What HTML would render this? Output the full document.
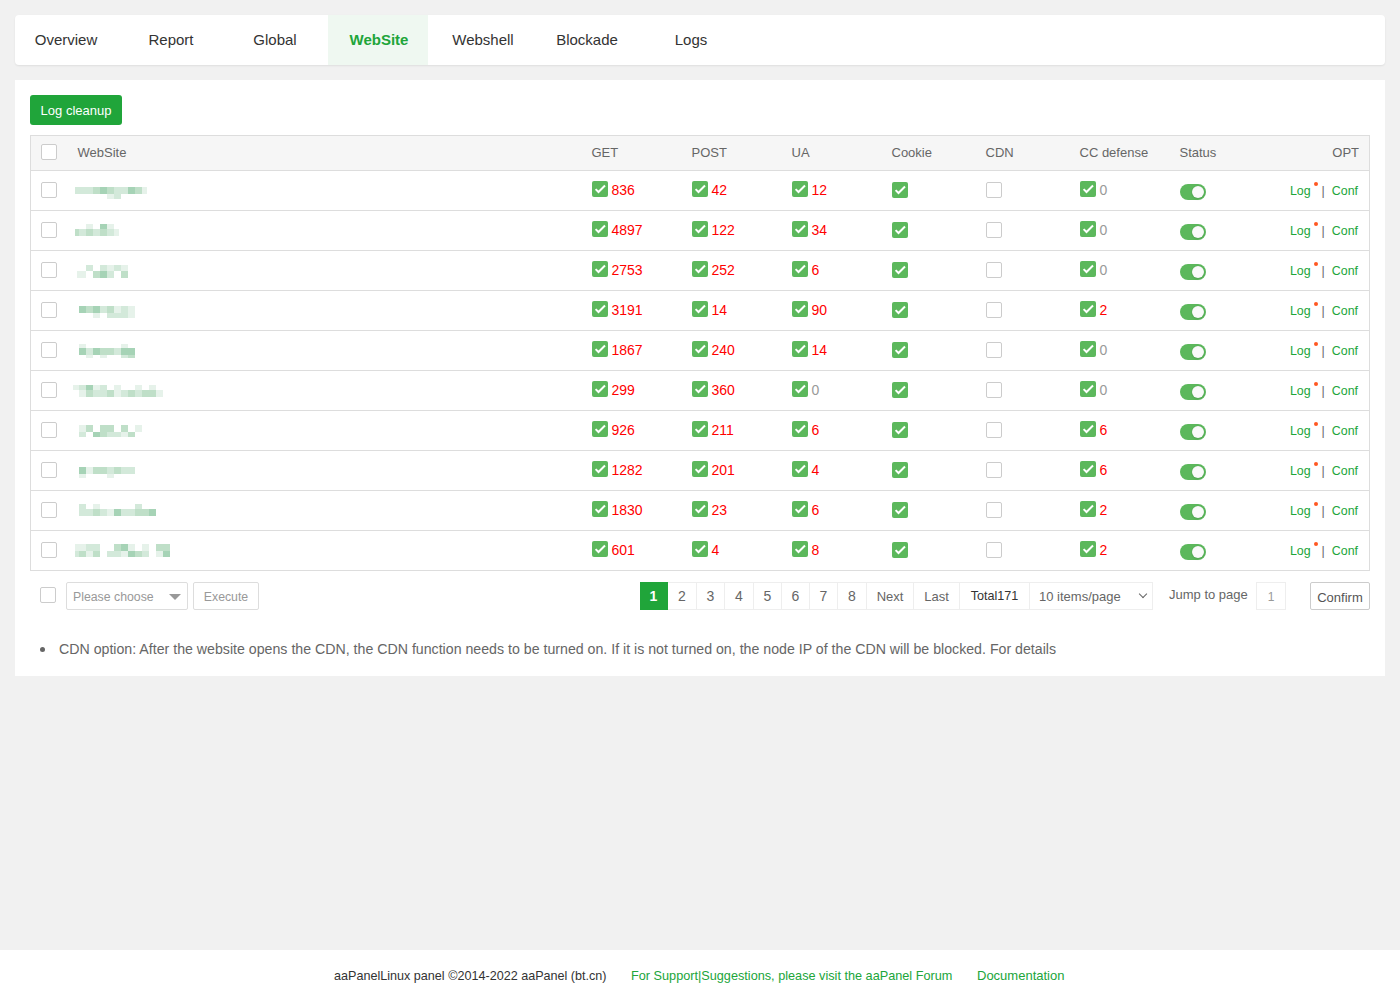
<!DOCTYPE html>
<html><head><meta charset="utf-8">
<style>
*{box-sizing:border-box;margin:0;padding:0}
html,body{width:1400px;height:1000px;overflow:hidden}
body{background:#f1f1f1;font-family:"Liberation Sans",sans-serif;color:#333;position:relative}
.nav{position:absolute;left:15px;top:15px;width:1370px;height:50px;background:#fff;border-radius:4px;box-shadow:0 1px 2px rgba(0,0,0,.08)}
.nav a{position:absolute;top:0;width:100px;height:50px;line-height:50px;text-align:center;font-size:15px;color:#333}
.nav a+a{padding-left:2px}
.nav a.on{background:#eff8f1;color:#20a53a;font-weight:bold}
.card{position:absolute;left:15px;top:80px;width:1370px;height:596px;background:#fff}
.btn{position:absolute;left:15px;top:15px;width:92px;height:30px;background:#20a53a;color:#fff;border-radius:3px;font-size:13px;line-height:32px;text-align:center}
table{position:absolute;left:15px;top:55px;width:1340px;border-collapse:collapse;table-layout:fixed;font-size:13px}
th,td{border-top:1px solid #ddd;padding:0 10px;text-align:left;white-space:nowrap}
table{border:1px solid #ddd}
th{padding-bottom:2px;height:35px;background:#f6f6f6;font-weight:normal;color:#666;font-size:13px}
td{height:40px;color:#666;padding-bottom:2px}
.bx{display:inline-block;width:16px;height:16px;border:1px solid #ccc;border-radius:2px;vertical-align:middle;background:#fff}
.ck{display:inline-block;width:16px;height:16px;background:#5cb85c;border-radius:2px;vertical-align:middle}
.ck svg{display:block}
.c2 .ck,.c3 .ck,.c4 .ck,.c7 .ck{position:relative;top:-1px}
.tg{position:relative;top:2px}
.n{display:inline-block;margin-left:4px;vertical-align:middle;font-size:14px}
.r{color:#f00}.z{color:#999}
.tg{display:inline-block;position:relative;width:26px;height:16px;border-radius:8px;background:#5cb85c;vertical-align:middle}
.tg i{position:absolute;right:1.5px;top:2px;width:12px;height:12px;border-radius:50%;background:#fafafa;box-shadow:0 0 1px rgba(0,80,0,.35),0 2px 2px rgba(0,0,0,.06)}
.c9{text-align:right;color:#20a53a;font-size:12.4px;padding-right:11px}
.c9 a,.c9 .sep{position:relative;top:1px}
.c9 a{color:#20a53a}
.dot{display:inline-block;width:4px;height:4px;border-radius:50%;background:#ff5722;vertical-align:baseline;margin:0 0 0 3px;position:relative;top:-8px}
.sep{margin:0 7px 0 4px;color:#666}
.blob{display:inline-block;height:12px;background:#d3eadb;vertical-align:middle;border-radius:3px}
.foot{position:absolute;left:0;top:950px;width:1400px;height:50px;background:#fff;font-size:13px;line-height:50px;text-align:center}
.foot span{position:absolute;top:1px;white-space:nowrap}
.foot .g{color:#20a53a}
.pg{position:absolute;top:502px;height:28px;font-size:14px}

.sel{position:absolute;top:582px;height:28px;border:1px solid #ddd;border-radius:2px;font-size:12.3px;color:#999;line-height:28px;padding-left:6px}
.exe{padding-left:0;text-align:center}
.tri{position:absolute;right:6px;top:11px;width:0;height:0;border-left:6px solid transparent;border-right:6px solid transparent;border-top:6px solid #999}
.pgs span{position:absolute;top:582px;height:28px;border-top:1px solid #eee;border-bottom:1px solid #eee;border-right:1px solid #eee;text-align:center;line-height:27px;font-size:14px;color:#666}
.pgs span.on{background:#20a53a;color:#fff;border-color:#20a53a;font-weight:bold}
.pgs span.wd{font-size:13px}
.pgs .tot{color:#333;font-size:12.6px}
.pgs .ipp{font-size:13px;color:#666;text-align:left;padding-left:9px}
.chev{position:absolute;right:6px;top:8px;width:6px;height:6px;border-right:1.5px solid #666;border-bottom:1.5px solid #666;transform:rotate(45deg)}
.jump{position:absolute;top:582px;height:28px;line-height:26px;font-size:13px;color:#666}
.inp{position:absolute;top:582px;width:30px;height:28px;border:1px solid #eee;text-align:center;line-height:28px;font-size:12px;color:#999}
.conf{position:absolute;top:582px;width:60px;height:28px;border:1px solid #ccc;border-radius:2px;text-align:center;line-height:29px;font-size:13px;color:#555}
.note{position:absolute;left:59px;top:641px;font-size:14.18px;color:#666;white-space:nowrap}
.bul{position:absolute;left:-19.5px;top:6px;width:5px;height:5px;border-radius:50%;background:#666}
.blobs{position:absolute;left:0;top:0;pointer-events:none}
</style></head><body>
<div class="nav">
<a style="left:1px">Overview</a><a style="left:105px">Report</a><a style="left:209px">Global</a><a class="on" style="left:313px">WebSite</a><a style="left:417px">Webshell</a><a style="left:521px">Blockade</a><a style="left:625px">Logs</a>
</div>
<div class="card">
<div class="btn">Log cleanup</div>
<table>
<colgroup><col style="width:37px"><col style="width:514px"><col style="width:100px"><col style="width:100px"><col style="width:100px"><col style="width:94px"><col style="width:94px"><col style="width:100px"><col style="width:80px"><col></colgroup>
<tr><th><span class="bx"></span></th><th>WebSite</th><th>GET</th><th>POST</th><th>UA</th><th>Cookie</th><th>CDN</th><th>CC defense</th><th>Status</th><th style="text-align:right">OPT</th></tr>
<tr>
<td class="c0"><span class="bx"></span></td>
<td class="c1"></td>
<td class="c2"><span class="ck"><svg width="16" height="16" viewBox="0 0 16 16"><path d="M3.6 8.1 L6.5 11 L13 4.5" fill="none" stroke="#fff" stroke-width="2"/></svg></span><span class="n r">836</span></td>
<td class="c3"><span class="ck"><svg width="16" height="16" viewBox="0 0 16 16"><path d="M3.6 8.1 L6.5 11 L13 4.5" fill="none" stroke="#fff" stroke-width="2"/></svg></span><span class="n r">42</span></td>
<td class="c4"><span class="ck"><svg width="16" height="16" viewBox="0 0 16 16"><path d="M3.6 8.1 L6.5 11 L13 4.5" fill="none" stroke="#fff" stroke-width="2"/></svg></span><span class="n r">12</span></td>
<td class="c5"><span class="ck"><svg width="16" height="16" viewBox="0 0 16 16"><path d="M3.6 8.1 L6.5 11 L13 4.5" fill="none" stroke="#fff" stroke-width="2"/></svg></span></td>
<td class="c6"><span class="bx"></span></td>
<td class="c7"><span class="ck"><svg width="16" height="16" viewBox="0 0 16 16"><path d="M3.6 8.1 L6.5 11 L13 4.5" fill="none" stroke="#fff" stroke-width="2"/></svg></span><span class="n z">0</span></td>
<td class="c8"><span class="tg"><i></i></span></td>
<td class="c9"><a>Log</a><b class="dot"></b><span class="sep">|</span><a>Conf</a></td>
</tr>
<tr>
<td class="c0"><span class="bx"></span></td>
<td class="c1"></td>
<td class="c2"><span class="ck"><svg width="16" height="16" viewBox="0 0 16 16"><path d="M3.6 8.1 L6.5 11 L13 4.5" fill="none" stroke="#fff" stroke-width="2"/></svg></span><span class="n r">4897</span></td>
<td class="c3"><span class="ck"><svg width="16" height="16" viewBox="0 0 16 16"><path d="M3.6 8.1 L6.5 11 L13 4.5" fill="none" stroke="#fff" stroke-width="2"/></svg></span><span class="n r">122</span></td>
<td class="c4"><span class="ck"><svg width="16" height="16" viewBox="0 0 16 16"><path d="M3.6 8.1 L6.5 11 L13 4.5" fill="none" stroke="#fff" stroke-width="2"/></svg></span><span class="n r">34</span></td>
<td class="c5"><span class="ck"><svg width="16" height="16" viewBox="0 0 16 16"><path d="M3.6 8.1 L6.5 11 L13 4.5" fill="none" stroke="#fff" stroke-width="2"/></svg></span></td>
<td class="c6"><span class="bx"></span></td>
<td class="c7"><span class="ck"><svg width="16" height="16" viewBox="0 0 16 16"><path d="M3.6 8.1 L6.5 11 L13 4.5" fill="none" stroke="#fff" stroke-width="2"/></svg></span><span class="n z">0</span></td>
<td class="c8"><span class="tg"><i></i></span></td>
<td class="c9"><a>Log</a><b class="dot"></b><span class="sep">|</span><a>Conf</a></td>
</tr>
<tr>
<td class="c0"><span class="bx"></span></td>
<td class="c1"></td>
<td class="c2"><span class="ck"><svg width="16" height="16" viewBox="0 0 16 16"><path d="M3.6 8.1 L6.5 11 L13 4.5" fill="none" stroke="#fff" stroke-width="2"/></svg></span><span class="n r">2753</span></td>
<td class="c3"><span class="ck"><svg width="16" height="16" viewBox="0 0 16 16"><path d="M3.6 8.1 L6.5 11 L13 4.5" fill="none" stroke="#fff" stroke-width="2"/></svg></span><span class="n r">252</span></td>
<td class="c4"><span class="ck"><svg width="16" height="16" viewBox="0 0 16 16"><path d="M3.6 8.1 L6.5 11 L13 4.5" fill="none" stroke="#fff" stroke-width="2"/></svg></span><span class="n r">6</span></td>
<td class="c5"><span class="ck"><svg width="16" height="16" viewBox="0 0 16 16"><path d="M3.6 8.1 L6.5 11 L13 4.5" fill="none" stroke="#fff" stroke-width="2"/></svg></span></td>
<td class="c6"><span class="bx"></span></td>
<td class="c7"><span class="ck"><svg width="16" height="16" viewBox="0 0 16 16"><path d="M3.6 8.1 L6.5 11 L13 4.5" fill="none" stroke="#fff" stroke-width="2"/></svg></span><span class="n z">0</span></td>
<td class="c8"><span class="tg"><i></i></span></td>
<td class="c9"><a>Log</a><b class="dot"></b><span class="sep">|</span><a>Conf</a></td>
</tr>
<tr>
<td class="c0"><span class="bx"></span></td>
<td class="c1"></td>
<td class="c2"><span class="ck"><svg width="16" height="16" viewBox="0 0 16 16"><path d="M3.6 8.1 L6.5 11 L13 4.5" fill="none" stroke="#fff" stroke-width="2"/></svg></span><span class="n r">3191</span></td>
<td class="c3"><span class="ck"><svg width="16" height="16" viewBox="0 0 16 16"><path d="M3.6 8.1 L6.5 11 L13 4.5" fill="none" stroke="#fff" stroke-width="2"/></svg></span><span class="n r">14</span></td>
<td class="c4"><span class="ck"><svg width="16" height="16" viewBox="0 0 16 16"><path d="M3.6 8.1 L6.5 11 L13 4.5" fill="none" stroke="#fff" stroke-width="2"/></svg></span><span class="n r">90</span></td>
<td class="c5"><span class="ck"><svg width="16" height="16" viewBox="0 0 16 16"><path d="M3.6 8.1 L6.5 11 L13 4.5" fill="none" stroke="#fff" stroke-width="2"/></svg></span></td>
<td class="c6"><span class="bx"></span></td>
<td class="c7"><span class="ck"><svg width="16" height="16" viewBox="0 0 16 16"><path d="M3.6 8.1 L6.5 11 L13 4.5" fill="none" stroke="#fff" stroke-width="2"/></svg></span><span class="n r">2</span></td>
<td class="c8"><span class="tg"><i></i></span></td>
<td class="c9"><a>Log</a><b class="dot"></b><span class="sep">|</span><a>Conf</a></td>
</tr>
<tr>
<td class="c0"><span class="bx"></span></td>
<td class="c1"></td>
<td class="c2"><span class="ck"><svg width="16" height="16" viewBox="0 0 16 16"><path d="M3.6 8.1 L6.5 11 L13 4.5" fill="none" stroke="#fff" stroke-width="2"/></svg></span><span class="n r">1867</span></td>
<td class="c3"><span class="ck"><svg width="16" height="16" viewBox="0 0 16 16"><path d="M3.6 8.1 L6.5 11 L13 4.5" fill="none" stroke="#fff" stroke-width="2"/></svg></span><span class="n r">240</span></td>
<td class="c4"><span class="ck"><svg width="16" height="16" viewBox="0 0 16 16"><path d="M3.6 8.1 L6.5 11 L13 4.5" fill="none" stroke="#fff" stroke-width="2"/></svg></span><span class="n r">14</span></td>
<td class="c5"><span class="ck"><svg width="16" height="16" viewBox="0 0 16 16"><path d="M3.6 8.1 L6.5 11 L13 4.5" fill="none" stroke="#fff" stroke-width="2"/></svg></span></td>
<td class="c6"><span class="bx"></span></td>
<td class="c7"><span class="ck"><svg width="16" height="16" viewBox="0 0 16 16"><path d="M3.6 8.1 L6.5 11 L13 4.5" fill="none" stroke="#fff" stroke-width="2"/></svg></span><span class="n z">0</span></td>
<td class="c8"><span class="tg"><i></i></span></td>
<td class="c9"><a>Log</a><b class="dot"></b><span class="sep">|</span><a>Conf</a></td>
</tr>
<tr>
<td class="c0"><span class="bx"></span></td>
<td class="c1"></td>
<td class="c2"><span class="ck"><svg width="16" height="16" viewBox="0 0 16 16"><path d="M3.6 8.1 L6.5 11 L13 4.5" fill="none" stroke="#fff" stroke-width="2"/></svg></span><span class="n r">299</span></td>
<td class="c3"><span class="ck"><svg width="16" height="16" viewBox="0 0 16 16"><path d="M3.6 8.1 L6.5 11 L13 4.5" fill="none" stroke="#fff" stroke-width="2"/></svg></span><span class="n r">360</span></td>
<td class="c4"><span class="ck"><svg width="16" height="16" viewBox="0 0 16 16"><path d="M3.6 8.1 L6.5 11 L13 4.5" fill="none" stroke="#fff" stroke-width="2"/></svg></span><span class="n z">0</span></td>
<td class="c5"><span class="ck"><svg width="16" height="16" viewBox="0 0 16 16"><path d="M3.6 8.1 L6.5 11 L13 4.5" fill="none" stroke="#fff" stroke-width="2"/></svg></span></td>
<td class="c6"><span class="bx"></span></td>
<td class="c7"><span class="ck"><svg width="16" height="16" viewBox="0 0 16 16"><path d="M3.6 8.1 L6.5 11 L13 4.5" fill="none" stroke="#fff" stroke-width="2"/></svg></span><span class="n z">0</span></td>
<td class="c8"><span class="tg"><i></i></span></td>
<td class="c9"><a>Log</a><b class="dot"></b><span class="sep">|</span><a>Conf</a></td>
</tr>
<tr>
<td class="c0"><span class="bx"></span></td>
<td class="c1"></td>
<td class="c2"><span class="ck"><svg width="16" height="16" viewBox="0 0 16 16"><path d="M3.6 8.1 L6.5 11 L13 4.5" fill="none" stroke="#fff" stroke-width="2"/></svg></span><span class="n r">926</span></td>
<td class="c3"><span class="ck"><svg width="16" height="16" viewBox="0 0 16 16"><path d="M3.6 8.1 L6.5 11 L13 4.5" fill="none" stroke="#fff" stroke-width="2"/></svg></span><span class="n r">211</span></td>
<td class="c4"><span class="ck"><svg width="16" height="16" viewBox="0 0 16 16"><path d="M3.6 8.1 L6.5 11 L13 4.5" fill="none" stroke="#fff" stroke-width="2"/></svg></span><span class="n r">6</span></td>
<td class="c5"><span class="ck"><svg width="16" height="16" viewBox="0 0 16 16"><path d="M3.6 8.1 L6.5 11 L13 4.5" fill="none" stroke="#fff" stroke-width="2"/></svg></span></td>
<td class="c6"><span class="bx"></span></td>
<td class="c7"><span class="ck"><svg width="16" height="16" viewBox="0 0 16 16"><path d="M3.6 8.1 L6.5 11 L13 4.5" fill="none" stroke="#fff" stroke-width="2"/></svg></span><span class="n r">6</span></td>
<td class="c8"><span class="tg"><i></i></span></td>
<td class="c9"><a>Log</a><b class="dot"></b><span class="sep">|</span><a>Conf</a></td>
</tr>
<tr>
<td class="c0"><span class="bx"></span></td>
<td class="c1"></td>
<td class="c2"><span class="ck"><svg width="16" height="16" viewBox="0 0 16 16"><path d="M3.6 8.1 L6.5 11 L13 4.5" fill="none" stroke="#fff" stroke-width="2"/></svg></span><span class="n r">1282</span></td>
<td class="c3"><span class="ck"><svg width="16" height="16" viewBox="0 0 16 16"><path d="M3.6 8.1 L6.5 11 L13 4.5" fill="none" stroke="#fff" stroke-width="2"/></svg></span><span class="n r">201</span></td>
<td class="c4"><span class="ck"><svg width="16" height="16" viewBox="0 0 16 16"><path d="M3.6 8.1 L6.5 11 L13 4.5" fill="none" stroke="#fff" stroke-width="2"/></svg></span><span class="n r">4</span></td>
<td class="c5"><span class="ck"><svg width="16" height="16" viewBox="0 0 16 16"><path d="M3.6 8.1 L6.5 11 L13 4.5" fill="none" stroke="#fff" stroke-width="2"/></svg></span></td>
<td class="c6"><span class="bx"></span></td>
<td class="c7"><span class="ck"><svg width="16" height="16" viewBox="0 0 16 16"><path d="M3.6 8.1 L6.5 11 L13 4.5" fill="none" stroke="#fff" stroke-width="2"/></svg></span><span class="n r">6</span></td>
<td class="c8"><span class="tg"><i></i></span></td>
<td class="c9"><a>Log</a><b class="dot"></b><span class="sep">|</span><a>Conf</a></td>
</tr>
<tr>
<td class="c0"><span class="bx"></span></td>
<td class="c1"></td>
<td class="c2"><span class="ck"><svg width="16" height="16" viewBox="0 0 16 16"><path d="M3.6 8.1 L6.5 11 L13 4.5" fill="none" stroke="#fff" stroke-width="2"/></svg></span><span class="n r">1830</span></td>
<td class="c3"><span class="ck"><svg width="16" height="16" viewBox="0 0 16 16"><path d="M3.6 8.1 L6.5 11 L13 4.5" fill="none" stroke="#fff" stroke-width="2"/></svg></span><span class="n r">23</span></td>
<td class="c4"><span class="ck"><svg width="16" height="16" viewBox="0 0 16 16"><path d="M3.6 8.1 L6.5 11 L13 4.5" fill="none" stroke="#fff" stroke-width="2"/></svg></span><span class="n r">6</span></td>
<td class="c5"><span class="ck"><svg width="16" height="16" viewBox="0 0 16 16"><path d="M3.6 8.1 L6.5 11 L13 4.5" fill="none" stroke="#fff" stroke-width="2"/></svg></span></td>
<td class="c6"><span class="bx"></span></td>
<td class="c7"><span class="ck"><svg width="16" height="16" viewBox="0 0 16 16"><path d="M3.6 8.1 L6.5 11 L13 4.5" fill="none" stroke="#fff" stroke-width="2"/></svg></span><span class="n r">2</span></td>
<td class="c8"><span class="tg"><i></i></span></td>
<td class="c9"><a>Log</a><b class="dot"></b><span class="sep">|</span><a>Conf</a></td>
</tr>
<tr>
<td class="c0"><span class="bx"></span></td>
<td class="c1"></td>
<td class="c2"><span class="ck"><svg width="16" height="16" viewBox="0 0 16 16"><path d="M3.6 8.1 L6.5 11 L13 4.5" fill="none" stroke="#fff" stroke-width="2"/></svg></span><span class="n r">601</span></td>
<td class="c3"><span class="ck"><svg width="16" height="16" viewBox="0 0 16 16"><path d="M3.6 8.1 L6.5 11 L13 4.5" fill="none" stroke="#fff" stroke-width="2"/></svg></span><span class="n r">4</span></td>
<td class="c4"><span class="ck"><svg width="16" height="16" viewBox="0 0 16 16"><path d="M3.6 8.1 L6.5 11 L13 4.5" fill="none" stroke="#fff" stroke-width="2"/></svg></span><span class="n r">8</span></td>
<td class="c5"><span class="ck"><svg width="16" height="16" viewBox="0 0 16 16"><path d="M3.6 8.1 L6.5 11 L13 4.5" fill="none" stroke="#fff" stroke-width="2"/></svg></span></td>
<td class="c6"><span class="bx"></span></td>
<td class="c7"><span class="ck"><svg width="16" height="16" viewBox="0 0 16 16"><path d="M3.6 8.1 L6.5 11 L13 4.5" fill="none" stroke="#fff" stroke-width="2"/></svg></span><span class="n r">2</span></td>
<td class="c8"><span class="tg"><i></i></span></td>
<td class="c9"><a>Log</a><b class="dot"></b><span class="sep">|</span><a>Conf</a></td>
</tr>
</table>


</div>
<div class="pf">
<span class="bx" style="position:absolute;left:40px;top:587px"></span>
<div class="sel" style="left:66px;width:122px">Please choose<i class="tri"></i></div>
<div class="sel exe" style="left:193px;width:66px">Execute</div>
<div class="pgs"><span class="on" style="left:640px;width:28px">1</span><span style="left:668px;width:29px">2</span><span style="left:697px;width:28px">3</span><span style="left:725px;width:29px">4</span><span style="left:754px;width:28px">5</span><span style="left:782px;width:28px">6</span><span style="left:810px;width:28px">7</span><span style="left:838px;width:29px">8</span><span class="wd" style="left:867px;width:47px">Next</span><span class="wd" style="left:914px;width:46px">Last</span><span class="tot" style="left:960px;width:70px">Total171</span><span class="ipp" style="left:1030px;width:123px">10 items/page<i class="chev"></i></span></div>
<div class="jump" style="left:1169px">Jump to page</div>
<div class="inp" style="left:1256px">1</div>
<div class="conf" style="left:1310px">Confirm</div>
</div>
<div class="note"><i class="bul"></i>CDN option: After the website opens the CDN, the CDN function needs to be turned on. If it is not turned on, the node IP of the CDN will be blocked. For details</div>
<svg class="blobs" width="1400" height="1000" viewBox="0 0 1400 1000"><rect x="75" y="187" width="11" height="7" fill="#d3e9da"/><rect x="86" y="187" width="7" height="7" fill="#d3e9da"/><rect x="93" y="187" width="7" height="7" fill="#bfdfc8"/><rect x="100" y="187" width="7" height="7" fill="#a6d3b6"/><rect x="107" y="187" width="7" height="7" fill="#bfdfc8"/><rect x="114" y="187" width="7" height="7" fill="#d3e9da"/><rect x="121" y="187" width="7" height="7" fill="#d3e9da"/><rect x="128" y="187" width="7" height="7" fill="#a6d3b6"/><rect x="135" y="187" width="7" height="7" fill="#bfdfc8"/><rect x="142" y="187" width="5" height="7" fill="#e6f2ea"/><rect x="107" y="194" width="7" height="5" fill="#e6f2ea"/><rect x="114" y="194" width="7" height="5" fill="#d3e9da"/><rect x="86" y="224" width="7" height="5" fill="#e6f2ea"/><rect x="100" y="224" width="7" height="5" fill="#a6d3b6"/><rect x="107" y="224" width="7" height="5" fill="#e6f2ea"/><rect x="75" y="229" width="4" height="7" fill="#bfdfc8"/><rect x="79" y="229" width="7" height="7" fill="#d3e9da"/><rect x="86" y="229" width="7" height="7" fill="#bfdfc8"/><rect x="93" y="229" width="7" height="7" fill="#d3e9da"/><rect x="100" y="229" width="7" height="7" fill="#bfdfc8"/><rect x="107" y="229" width="7" height="7" fill="#d3e9da"/><rect x="114" y="229" width="5" height="7" fill="#e6f2ea"/><rect x="86" y="265" width="7" height="6" fill="#d3e9da"/><rect x="100" y="265" width="7" height="6" fill="#d3e9da"/><rect x="107" y="265" width="7" height="6" fill="#e6f2ea"/><rect x="114" y="265" width="7" height="6" fill="#d3e9da"/><rect x="121" y="265" width="7" height="6" fill="#e6f2ea"/><rect x="77" y="271" width="9" height="7" fill="#e6f2ea"/><rect x="93" y="271" width="7" height="7" fill="#bfdfc8"/><rect x="100" y="271" width="7" height="7" fill="#a6d3b6"/><rect x="107" y="271" width="7" height="7" fill="#d3e9da"/><rect x="121" y="271" width="7" height="7" fill="#bfdfc8"/><rect x="79" y="306" width="7" height="7" fill="#a6d3b6"/><rect x="86" y="306" width="7" height="7" fill="#bfdfc8"/><rect x="93" y="306" width="7" height="7" fill="#a6d3b6"/><rect x="100" y="306" width="7" height="7" fill="#d3e9da"/><rect x="107" y="306" width="7" height="7" fill="#bfdfc8"/><rect x="114" y="306" width="7" height="7" fill="#e6f2ea"/><rect x="121" y="306" width="7" height="7" fill="#d3e9da"/><rect x="128" y="306" width="7" height="7" fill="#e6f2ea"/><rect x="93" y="313" width="7" height="5" fill="#e6f2ea"/><rect x="107" y="313" width="21" height="5" fill="#d3e9da"/><rect x="128" y="313" width="7" height="5" fill="#e6f2ea"/><rect x="79" y="344" width="7" height="4" fill="#e6f2ea"/><rect x="121" y="344" width="7" height="4" fill="#e6f2ea"/><rect x="79" y="348" width="7" height="7" fill="#a6d3b6"/><rect x="86" y="348" width="7" height="7" fill="#d3e9da"/><rect x="93" y="348" width="7" height="7" fill="#a6d3b6"/><rect x="100" y="348" width="7" height="7" fill="#bfdfc8"/><rect x="107" y="348" width="7" height="7" fill="#bfdfc8"/><rect x="114" y="348" width="7" height="7" fill="#d3e9da"/><rect x="121" y="348" width="14" height="7" fill="#a6d3b6"/><rect x="86" y="355" width="7" height="3" fill="#e6f2ea"/><rect x="100" y="355" width="7" height="3" fill="#e6f2ea"/><rect x="121" y="355" width="7" height="3" fill="#d3e9da"/><rect x="128" y="355" width="7" height="3" fill="#bfdfc8"/><rect x="73" y="385" width="6" height="5" fill="#e6f2ea"/><rect x="79" y="385" width="7" height="5" fill="#d3e9da"/><rect x="86" y="385" width="7" height="5" fill="#a6d3b6"/><rect x="93" y="385" width="7" height="5" fill="#e6f2ea"/><rect x="100" y="385" width="7" height="5" fill="#d3e9da"/><rect x="114" y="385" width="7" height="5" fill="#e6f2ea"/><rect x="135" y="385" width="7" height="5" fill="#e6f2ea"/><rect x="149" y="385" width="7" height="5" fill="#e6f2ea"/><rect x="79" y="390" width="7" height="7" fill="#e6f2ea"/><rect x="86" y="390" width="7" height="7" fill="#bfdfc8"/><rect x="93" y="390" width="7" height="7" fill="#d3e9da"/><rect x="100" y="390" width="7" height="7" fill="#d3e9da"/><rect x="107" y="390" width="7" height="7" fill="#bfdfc8"/><rect x="114" y="390" width="7" height="7" fill="#e6f2ea"/><rect x="121" y="390" width="7" height="7" fill="#d3e9da"/><rect x="128" y="390" width="7" height="7" fill="#bfdfc8"/><rect x="135" y="390" width="7" height="7" fill="#d3e9da"/><rect x="142" y="390" width="7" height="7" fill="#bfdfc8"/><rect x="149" y="390" width="7" height="7" fill="#bfdfc8"/><rect x="156" y="390" width="7" height="7" fill="#e6f2ea"/><rect x="79" y="425" width="7" height="7" fill="#e6f2ea"/><rect x="86" y="425" width="7" height="7" fill="#bfdfc8"/><rect x="100" y="425" width="7" height="7" fill="#bfdfc8"/><rect x="107" y="425" width="7" height="7" fill="#bfdfc8"/><rect x="121" y="425" width="7" height="7" fill="#bfdfc8"/><rect x="135" y="425" width="7" height="7" fill="#e6f2ea"/><rect x="79" y="432" width="7" height="5" fill="#d3e9da"/><rect x="93" y="432" width="7" height="5" fill="#a6d3b6"/><rect x="100" y="432" width="7" height="5" fill="#bfdfc8"/><rect x="107" y="432" width="7" height="5" fill="#d3e9da"/><rect x="114" y="432" width="7" height="5" fill="#d3e9da"/><rect x="121" y="432" width="7" height="5" fill="#e6f2ea"/><rect x="128" y="432" width="7" height="5" fill="#bfdfc8"/><rect x="79" y="467" width="7" height="7" fill="#a6d3b6"/><rect x="86" y="467" width="7" height="7" fill="#e6f2ea"/><rect x="93" y="467" width="7" height="7" fill="#bfdfc8"/><rect x="100" y="467" width="7" height="7" fill="#bfdfc8"/><rect x="107" y="467" width="7" height="7" fill="#d3e9da"/><rect x="114" y="467" width="7" height="7" fill="#bfdfc8"/><rect x="121" y="467" width="7" height="7" fill="#d3e9da"/><rect x="128" y="467" width="7" height="7" fill="#d3e9da"/><rect x="79" y="474" width="7" height="4" fill="#e6f2ea"/><rect x="107" y="474" width="7" height="4" fill="#e6f2ea"/><rect x="79" y="504" width="7" height="5" fill="#d3e9da"/><rect x="93" y="504" width="7" height="5" fill="#e6f2ea"/><rect x="135" y="504" width="7" height="5" fill="#d3e9da"/><rect x="79" y="509" width="7" height="7" fill="#d3e9da"/><rect x="86" y="509" width="7" height="7" fill="#d3e9da"/><rect x="93" y="509" width="7" height="7" fill="#bfdfc8"/><rect x="100" y="509" width="7" height="7" fill="#d3e9da"/><rect x="107" y="509" width="7" height="7" fill="#e6f2ea"/><rect x="114" y="509" width="7" height="7" fill="#a6d3b6"/><rect x="121" y="509" width="7" height="7" fill="#d3e9da"/><rect x="128" y="509" width="7" height="7" fill="#d3e9da"/><rect x="135" y="509" width="7" height="7" fill="#bfdfc8"/><rect x="142" y="509" width="7" height="7" fill="#bfdfc8"/><rect x="149" y="509" width="7" height="7" fill="#a6d3b6"/><rect x="75" y="544" width="4" height="7" fill="#e6f2ea"/><rect x="79" y="544" width="7" height="7" fill="#e6f2ea"/><rect x="86" y="544" width="7" height="7" fill="#d3e9da"/><rect x="93" y="544" width="7" height="7" fill="#d3e9da"/><rect x="114" y="544" width="7" height="7" fill="#bfdfc8"/><rect x="121" y="544" width="7" height="7" fill="#a6d3b6"/><rect x="128" y="544" width="7" height="7" fill="#e6f2ea"/><rect x="142" y="544" width="7" height="7" fill="#e6f2ea"/><rect x="156" y="544" width="7" height="7" fill="#bfdfc8"/><rect x="163" y="544" width="7" height="7" fill="#bfdfc8"/><rect x="75" y="551" width="4" height="6" fill="#d3e9da"/><rect x="79" y="551" width="7" height="6" fill="#bfdfc8"/><rect x="86" y="551" width="7" height="6" fill="#e6f2ea"/><rect x="93" y="551" width="7" height="6" fill="#bfdfc8"/><rect x="107" y="551" width="7" height="6" fill="#d3e9da"/><rect x="114" y="551" width="7" height="6" fill="#d3e9da"/><rect x="121" y="551" width="7" height="6" fill="#e6f2ea"/><rect x="128" y="551" width="7" height="6" fill="#a6d3b6"/><rect x="135" y="551" width="7" height="6" fill="#bfdfc8"/><rect x="142" y="551" width="7" height="6" fill="#d3e9da"/><rect x="156" y="551" width="7" height="6" fill="#e6f2ea"/><rect x="163" y="551" width="7" height="6" fill="#a6d3b6"/></svg>
<div class="foot"><span style="left:334px;font-size:12.6px">aaPanelLinux panel ©2014-2022 aaPanel (bt.cn)</span><span class="g" style="left:631px;font-size:12.7px">For Support|Suggestions, please visit the aaPanel Forum</span><span class="g" style="left:977px;font-size:13px">Documentation</span></div>
</body></html>
